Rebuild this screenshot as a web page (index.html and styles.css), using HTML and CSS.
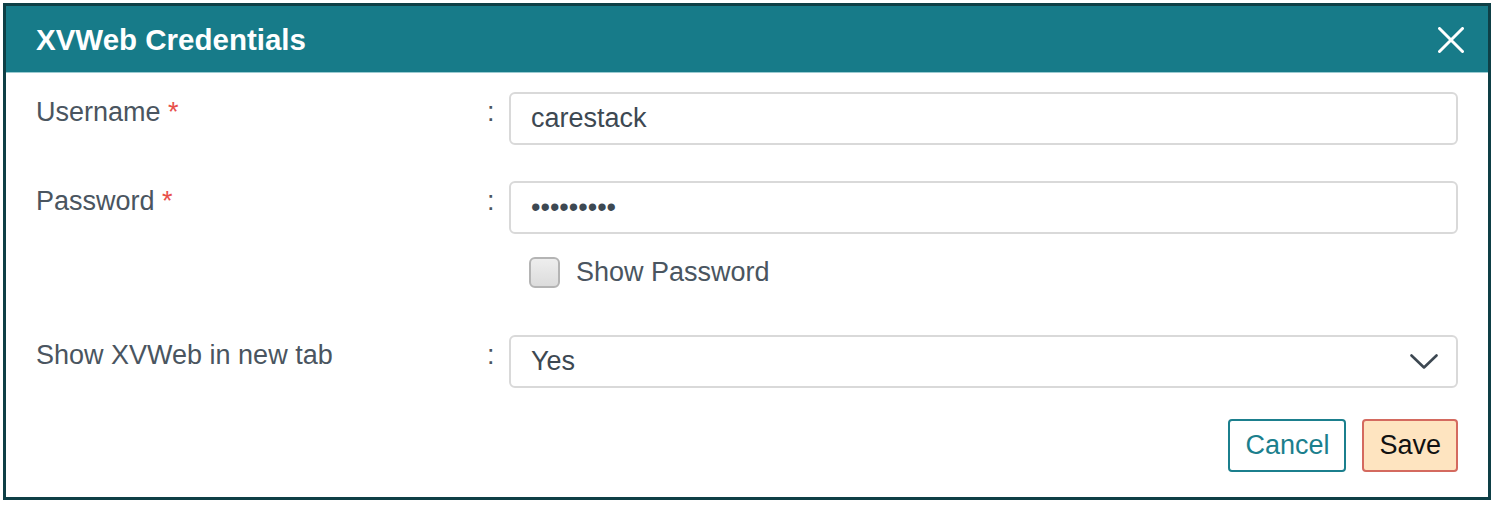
FILE: index.html
```html
<!DOCTYPE html>
<html lang="en">
<head>
    <meta charset="UTF-8">
    <meta name="viewport" content="width=device-width, initial-scale=1.0">
    <title>XVWeb Credentials</title>
    <link rel="stylesheet" href="styles.css">
</head>
<body>
    <div class="modal">
        <div class="modal-header">
            <h2>XVWeb Credentials</h2>
            <button class="close-btn" aria-label="Close">
                <svg width="26" height="26" viewBox="0 0 26 26">
                    <path d="M1.5 1.5 L24.5 24.5 M24.5 1.5 L1.5 24.5" stroke="#fff" stroke-width="3" stroke-linecap="round"/>
                </svg>
            </button>
        </div>

        <form class="modal-body">
            <div class="form-row">
                <label class="field-label">Username <span class="req">*</span></label>
                <span class="colon">:</span>
                <div class="field">
                    <input type="text" class="text-input" value="carestack">
                </div>
            </div>

            <div class="form-row">
                <label class="field-label">Password <span class="req">*</span></label>
                <span class="colon">:</span>
                <div class="field">
                    <input type="password" class="text-input" value="123456789">
                    <label class="check">
                        <span class="check-box"></span>
                        Show Password
                    </label>
                </div>
            </div>

            <div class="form-row">
                <label class="field-label">Show XVWeb in new tab</label>
                <span class="colon">:</span>
                <div class="field">
                    <div class="select">
                        <span>Yes</span>
                        <svg width="28" height="16" viewBox="0 0 28 16">
                            <path d="M1.5 1.5 L14 13.5 L26.5 1.5" fill="none" stroke="#3d4852" stroke-width="2.6" stroke-linecap="round" stroke-linejoin="round"/>
                        </svg>
                    </div>
                </div>
            </div>

            <div class="actions">
                <button type="button" class="btn btn-cancel">Cancel</button>
                <button type="button" class="btn btn-save">Save</button>
            </div>
        </form>
    </div>
</body>
</html>
```

FILE: styles.css
```css
:root {
    --teal: #177b89;
    --teal-dark: #0e3f46;
    --label: #4a5560;
    --text: #3d4852;
    --line: #d9d9d9;
}

* {
    margin: 0;
    padding: 0;
    box-sizing: border-box;
    font-family: 'Liberation Sans', Arial, sans-serif;
}

body {
    background: #fff;
    padding: 3px;
}

.modal {
    width: 1488px;
    height: 497px;
    border: 3px solid var(--teal-dark);
    background: #fff;
}

.modal-header {
    height: 67px;
    background: var(--teal);
    border-bottom: 1px solid #9ccbd1;
    display: flex;
    align-items: center;
    justify-content: space-between;
    padding: 2px 24px 0 30px;
}

.modal-header h2 {
    color: #fff;
    font-size: 29.5px;
    font-weight: bold;
}

.close-btn {
    background: none;
    border: none;
    display: flex;
    cursor: pointer;
}

.modal-body {
    padding: 19px 30px 0 30px;
    font-size: 27px;
}

.form-row {
    display: grid;
    grid-template-columns: 448px 25px 1fr;
    margin-bottom: 36px;
}

.field-label {
    color: var(--label);
    padding-top: 5px;
}

.req {
    color: #e8504a;
}

.colon {
    color: var(--label);
    padding: 5px 0 0 3px;
}

.text-input,
.select {
    width: 100%;
    height: 53px;
    border: 2px solid var(--line);
    border-radius: 6px;
    padding: 0 18px 0 20px;
    font-size: 27px;
    color: var(--text);
    background: #fff;
    outline: none;
}

.select {
    display: flex;
    align-items: center;
    justify-content: space-between;
}

.check {
    display: flex;
    align-items: center;
    gap: 16px;
    margin: 23px 0 11px 20px;
    color: var(--label);
}

.check-box {
    width: 31px;
    height: 31px;
    border: 2px solid #b4b4b4;
    border-radius: 6px;
    background: linear-gradient(#eeeeee, #dcdcdc);
}

.actions {
    display: flex;
    justify-content: flex-end;
    gap: 16px;
    margin-top: -5px;
}

.btn {
    height: 53px;
    padding: 0 15px;
    font-size: 27px;
    border-radius: 4px;
    border: 2px solid;
    cursor: pointer;
}

.btn-cancel {
    background: #fff;
    border-color: #1b7f8d;
    color: #1b7f8d;
}

.btn-save {
    background: #fee4c0;
    border-color: #d46a5f;
    color: #111;
}
```
